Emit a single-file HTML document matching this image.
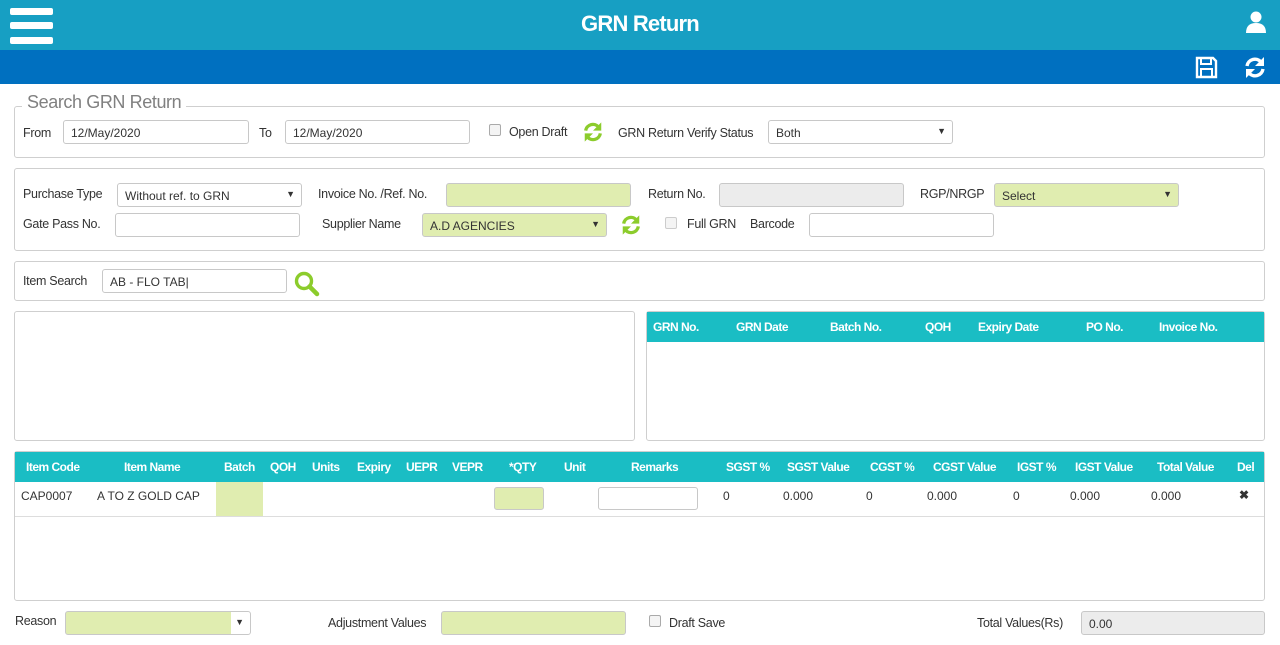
<!DOCTYPE html>
<html><head><meta charset="utf-8"><style>
*{box-sizing:border-box;margin:0;padding:0}
body{width:1280px;height:645px;position:relative;background:#fff;font-family:"Liberation Sans",sans-serif;color:#333;overflow:hidden;font-size:12px}
.a{position:absolute}
.lbl{position:absolute;font-size:12.5px;color:#333;letter-spacing:-0.3px;white-space:nowrap}
.in{position:absolute;height:24px;border:1px solid #c8c8c8;border-radius:3px;background:#fff;font-size:12px;padding:5px 7px;white-space:nowrap}
.g{background:#e0edb0}
.dis{background:#ececec}
.box{position:absolute;border:1px solid #cfcfcf;border-radius:3px}
.th{position:absolute;color:#fff;font-weight:bold;font-size:12px;letter-spacing:-0.5px;white-space:nowrap}
.td{position:absolute;font-size:12px;white-space:nowrap;color:#333}
.arr{position:absolute;right:6px;top:5px;font-size:9px}
.cb{position:absolute;width:12px;height:12px;border:1px solid #aaa;border-radius:2px;background:#f4f4f4}
</style></head><body>
<div class="a" style="left:0;top:0;width:1280px;height:50px;background:#179fc3"></div>
<div class="a" style="left:10px;top:8px;width:43px;height:7px;background:#fff;border-radius:2px"></div>
<div class="a" style="left:10px;top:22px;width:43px;height:7px;background:#fff;border-radius:2px"></div>
<div class="a" style="left:10px;top:37px;width:43px;height:7px;background:#fff;border-radius:2px"></div>
<div class="a" style="left:0;top:11px;width:1280px;text-align:center;color:#fff;font-weight:bold;font-size:22px;letter-spacing:-0.8px">GRN Return</div>
<svg class="a" style="left:1245px;top:11px" width="22" height="22" viewBox="0 0 22 22"><circle cx="11" cy="6" r="5.5" fill="#fff"/><path d="M1 22 Q1 12 11 12 Q21 12 21 22Z" fill="#fff"/></svg>
<div class="a" style="left:0;top:50px;width:1280px;height:34px;background:#0070c0"></div>
<svg class="a" style="left:1195px;top:56px" width="23" height="23" viewBox="0 0 23 23"><path d="M2 2h16l3 3v16H2z" fill="none" stroke="#fff" stroke-width="2.4"/><rect x="6" y="2" width="10" height="6" fill="none" stroke="#fff" stroke-width="2"/><rect x="6" y="13" width="11" height="8" fill="none" stroke="#fff" stroke-width="2"/></svg>
<svg class="a" style="left:1243px;top:56px" width="24" height="23" viewBox="0 0 24 23"><path d="M4 10 A8 8 0 0 1 18 6" fill="none" stroke="#fff" stroke-width="3.4"/><path d="M21 1v9h-9z" fill="#fff"/><path d="M20 13 A8 8 0 0 1 6 17" fill="none" stroke="#fff" stroke-width="3.4"/><path d="M3 22v-9h9z" fill="#fff"/></svg>

<div class="box" style="left:14px;top:106px;width:1251px;height:52px"></div>
<div class="a" style="left:22px;top:92px;background:#fff;padding:0 5px;font-size:18px;color:#808080;letter-spacing:-0.4px">Search GRN Return</div>
<div class="lbl" style="left:23px;top:126px">From</div>
<div class="in" style="left:63px;top:120px;width:186px">12/May/2020</div>
<div class="lbl" style="left:259px;top:126px">To</div>
<div class="in" style="left:285px;top:120px;width:185px">12/May/2020</div>
<div class="cb" style="left:489px;top:124px"></div>
<div class="lbl" style="left:509px;top:125px">Open Draft</div>
<svg class="a" style="left:582px;top:121px" width="22" height="22" viewBox="0 0 24 23"><path d="M4 10 A8 8 0 0 1 18 6" fill="none" stroke="#8ccc2c" stroke-width="3.6"/><path d="M21 1v9h-9z" fill="#8ccc2c"/><path d="M20 13 A8 8 0 0 1 6 17" fill="none" stroke="#8ccc2c" stroke-width="3.6"/><path d="M3 22v-9h9z" fill="#8ccc2c"/></svg>
<div class="lbl" style="left:618px;top:126px">GRN Return Verify Status</div>
<div class="in" style="left:768px;top:120px;width:185px">Both<span class="arr">▼</span></div>

<div class="box" style="left:14px;top:168px;width:1251px;height:83px"></div>
<div class="lbl" style="left:23px;top:187px">Purchase Type</div>
<div class="in" style="left:117px;top:183px;width:185px">Without ref. to GRN<span class="arr">▼</span></div>
<div class="lbl" style="left:318px;top:187px">Invoice No. /Ref. No.</div>
<div class="in g" style="left:446px;top:183px;width:185px"></div>
<div class="lbl" style="left:648px;top:187px">Return No.</div>
<div class="in dis" style="left:719px;top:183px;width:185px"></div>
<div class="lbl" style="left:920px;top:187px">RGP/NRGP</div>
<div class="in g" style="left:994px;top:183px;width:185px">Select<span class="arr">▼</span></div>
<div class="lbl" style="left:23px;top:217px">Gate Pass No.</div>
<div class="in" style="left:115px;top:213px;width:185px"></div>
<div class="lbl" style="left:322px;top:217px">Supplier Name</div>
<div class="in g" style="left:422px;top:213px;width:185px">A.D AGENCIES<span class="arr">▼</span></div>
<svg class="a" style="left:620px;top:214px" width="22" height="22" viewBox="0 0 24 23"><path d="M4 10 A8 8 0 0 1 18 6" fill="none" stroke="#8ccc2c" stroke-width="3.6"/><path d="M21 1v9h-9z" fill="#8ccc2c"/><path d="M20 13 A8 8 0 0 1 6 17" fill="none" stroke="#8ccc2c" stroke-width="3.6"/><path d="M3 22v-9h9z" fill="#8ccc2c"/></svg>
<div class="cb" style="left:665px;top:217px;border-color:#ccc"></div>
<div class="lbl" style="left:687px;top:217px">Full GRN</div>
<div class="lbl" style="left:750px;top:217px">Barcode</div>
<div class="in" style="left:809px;top:213px;width:185px"></div>

<div class="box" style="left:14px;top:261px;width:1251px;height:40px"></div>
<div class="lbl" style="left:23px;top:274px">Item Search</div>
<div class="in" style="left:102px;top:269px;width:185px">AB - FLO TAB|</div>
<svg class="a" style="left:294px;top:271px" width="26" height="26" viewBox="0 0 26 26"><circle cx="10" cy="10" r="7.5" fill="none" stroke="#8ccc2c" stroke-width="3.4"/><path d="M15.5 15.5L23 23" stroke="#8ccc2c" stroke-width="4.5" stroke-linecap="round"/></svg>

<div class="box" style="left:14px;top:311px;width:621px;height:130px"></div>
<div class="box" style="left:646px;top:311px;width:619px;height:130px"></div>
<div class="a" style="left:647px;top:312px;width:617px;height:30px;background:#1abdc4"></div>
<div class="th" style="left:653px;top:320px">GRN No.</div>
<div class="th" style="left:736px;top:320px">GRN Date</div>
<div class="th" style="left:830px;top:320px">Batch No.</div>
<div class="th" style="left:925px;top:320px">QOH</div>
<div class="th" style="left:978px;top:320px">Expiry Date</div>
<div class="th" style="left:1086px;top:320px">PO No.</div>
<div class="th" style="left:1159px;top:320px">Invoice No.</div>

<div class="box" style="left:14px;top:451px;width:1251px;height:150px"></div>
<div class="a" style="left:15px;top:452px;width:1249px;height:30px;background:#1abdc4"></div>
<div class="th" style="left:26px;top:460px">Item Code</div>
<div class="th" style="left:124px;top:460px">Item Name</div>
<div class="th" style="left:224px;top:460px">Batch</div>
<div class="th" style="left:270px;top:460px">QOH</div>
<div class="th" style="left:312px;top:460px">Units</div>
<div class="th" style="left:357px;top:460px">Expiry</div>
<div class="th" style="left:406px;top:460px">UEPR</div>
<div class="th" style="left:452px;top:460px">VEPR</div>
<div class="th" style="left:509px;top:460px">*QTY</div>
<div class="th" style="left:564px;top:460px">Unit</div>
<div class="th" style="left:631px;top:460px">Remarks</div>
<div class="th" style="left:726px;top:460px">SGST %</div>
<div class="th" style="left:787px;top:460px">SGST Value</div>
<div class="th" style="left:870px;top:460px">CGST %</div>
<div class="th" style="left:933px;top:460px">CGST Value</div>
<div class="th" style="left:1017px;top:460px">IGST %</div>
<div class="th" style="left:1075px;top:460px">IGST Value</div>
<div class="th" style="left:1157px;top:460px">Total Value</div>
<div class="th" style="left:1237px;top:460px">Del</div>
<div class="a" style="left:216px;top:482px;width:47px;height:34px;background:#e0edb0"></div>
<div class="a" style="left:15px;top:516px;width:1249px;height:1px;background:#ddd"></div>
<div class="td" style="left:21px;top:489px">CAP0007</div>
<div class="td" style="left:97px;top:489px">A TO Z GOLD CAP</div>
<div class="in g" style="left:494px;top:487px;width:50px;height:23px"></div>
<div class="in" style="left:598px;top:487px;width:100px;height:23px"></div>
<div class="td" style="left:723px;top:489px">0</div>
<div class="td" style="left:783px;top:489px">0.000</div>
<div class="td" style="left:866px;top:489px">0</div>
<div class="td" style="left:927px;top:489px">0.000</div>
<div class="td" style="left:1013px;top:489px">0</div>
<div class="td" style="left:1070px;top:489px">0.000</div>
<div class="td" style="left:1151px;top:489px">0.000</div>
<div class="td" style="left:1239px;top:488px;font-weight:bold">✖</div>

<div class="lbl" style="left:15px;top:614px">Reason</div>
<div class="in" style="left:65px;top:611px;width:186px;background:linear-gradient(to right,#e0edb0 165px,#fff 165px)"><span class="arr" style="font-size:9px">▼</span></div>
<div class="lbl" style="left:328px;top:616px">Adjustment Values</div>
<div class="in g" style="left:441px;top:611px;width:185px"></div>
<div class="cb" style="left:649px;top:615px"></div>
<div class="lbl" style="left:669px;top:616px">Draft Save</div>
<div class="lbl" style="left:977px;top:616px">Total Values(Rs)</div>
<div class="in dis" style="left:1081px;top:611px;width:184px">0.00</div>
</body></html>
